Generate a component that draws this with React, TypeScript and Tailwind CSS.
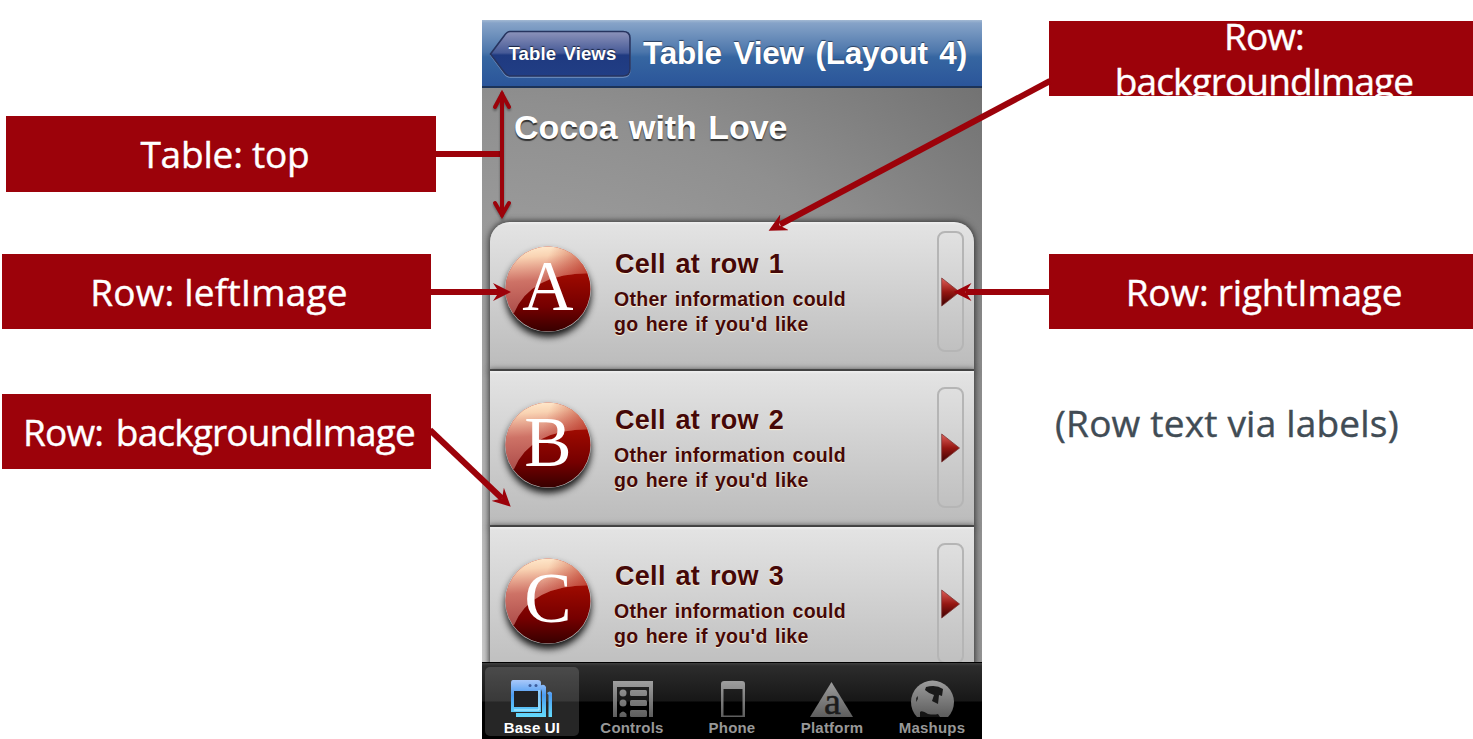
import React from "react";

const CALLOUT =
  "flex shrink-0 items-center justify-center bg-[#9c020a] text-center font-['Open_Sans',sans-serif] text-[37px] leading-[45px] text-white [-webkit-text-stroke:0.4px_white]";

function Callout({ className, children }: { className: string; children: React.ReactNode }) {
  return <div className={`${CALLOUT} ${className}`}>{children}</div>;
}

function NavBar() {
  return (
    <header className="flex h-[68px] shrink-0 items-start border-b-2 border-[#1c3358] bg-[linear-gradient(180deg,#a3b9d3_0px,#86a3c8_3px,#4c76ab_32px,#3666a1_37px,#2b559a_66px)]">
      <div className="relative ml-[7px] mt-[10px] flex h-[48px] w-[143px] items-center">
        <svg className="absolute inset-0" width="143" height="48" viewBox="0 0 143 48">
          <defs>
            <linearGradient id="back" x1="0" y1="0" x2="0" y2="1">
              <stop offset="0" stopColor="#8d93ba" />
              <stop offset=".48" stopColor="#465a97" />
              <stop offset=".53" stopColor="#1f3a80" />
              <stop offset="1" stopColor="#213e85" />
            </linearGradient>
          </defs>
          <path d="M21 2.5H134Q141 2.5 141 9V40Q141 47 134 47H21Q18 47 15 43L2 25.5L15 7Q18 2.5 21 2.5Z" fill="none" stroke="#7896c4" strokeWidth="1.5" />
          <path d="M21 1.5H134Q141 1.5 141 8V39Q141 46 134 46H21Q18 46 15 42L1.500 24L15 6Q18 1.500 21 1.500Z" fill="url(#back)" stroke="#27345f" strokeWidth="1.600" />
        </svg>
        <span className="relative ml-[19.5px] whitespace-nowrap text-[18.5px] font-bold leading-[24px] tracking-[0.15px] text-white [text-shadow:0_-1px_1px_#17233f] [word-spacing:2px]">
          Table Views
        </span>
      </div>
      <h1 className="ml-[11px] mt-[15px] whitespace-nowrap text-[31.5px] font-bold leading-[36px] tracking-[-0.2px] text-white [text-shadow:0_-1px_1px_#2b405f] [word-spacing:3px]">
        Table View (Layout 4)
      </h1>
    </header>
  );
}

function Disc({ letter }: { letter: string }) {
  return (
    <div className="relative mb-[37px] ml-[15px] flex h-[86px] w-[86px] shrink-0 justify-center rounded-full shadow-[0_5px_7px_#151515]">
      <svg className="absolute inset-0" width="86" height="86" viewBox="0 0 86 86">
        <defs>
          <linearGradient id="ball" x1="0" y1="0" x2="0" y2="1">
            <stop offset="0" stopColor="#c21a08" />
            <stop offset=".4" stopColor="#960800" />
            <stop offset=".7" stopColor="#760000" />
            <stop offset="1" stopColor="#360000" />
          </linearGradient>
          <linearGradient id="shine" x1=".4" y1="0" x2=".5" y2="1">
            <stop offset="0" stopColor="#ffe9cc" />
            <stop offset=".15" stopColor="#fbd9b8" stopOpacity=".97" />
            <stop offset=".5" stopColor="#e6a092" stopOpacity=".7" />
            <stop offset="1" stopColor="#dc8a85" stopOpacity=".55" />
          </linearGradient>
          <linearGradient id="tint" x1="0" y1="0" x2="1" y2=".3">
            <stop offset=".5" stopColor="#b01808" stopOpacity="0" />
            <stop offset="1" stopColor="#b01808" stopOpacity=".6" />
          </linearGradient>
          <clipPath id="round">
            <circle cx="43" cy="43" r="42.500" />
          </clipPath>
        </defs>
        <g clipPath="url(#round)">
          <rect width="86" height="86" fill="url(#ball)" />
          <path d="M0 0H86V27Q26 27 9 67L0 67Z" fill="url(#shine)" />
          <path d="M0 0H86V27Q26 27 9 67L0 67Z" fill="url(#tint)" />
        </g>
      </svg>
      <span className="relative font-['Liberation_Serif',serif] text-[71px] leading-[80px] text-white">
        {letter}
      </span>
    </div>
  );
}

function Row({ n, letter, className }: { n: number; letter: string; className: string }) {
  return (
    <div className={`mx-[8px] flex shrink-0 items-end border-b-2 border-[#555] bg-[linear-gradient(180deg,#f0f0f0_0px,#e3e3e3_3px,#bbb_100%)] shadow-[0_0_6px_1px_#333] ${className}`}>
      <Disc letter={letter} />
      <div className="mb-[32px] ml-[23px] grow text-[#450807] [text-shadow:0_1px_1px_#fff3d8]">
        <div className="mb-[2px] ml-[1px] whitespace-nowrap text-[27px] font-bold leading-[36px] tracking-[0.3px] [word-spacing:2px]">Cell at row {n}</div>
        <div className="mt-[5px] whitespace-nowrap text-[19.5px] font-bold leading-[25px] tracking-[0.3px] [word-spacing:1.5px]">
          Other information could
          <br />
          go here if you'd like
        </div>
      </div>
      <div className="mb-[17px] mr-[10.5px] flex h-[121px] w-[27px] shrink-0 items-center rounded-[8px] border-2 border-[#b5b5b5]">
        <svg width="20" height="30" viewBox="0 0 20 30" className="ml-[2px] shrink-0">
          <defs>
            <linearGradient id="tri" x1="0" y1="0" x2="0" y2="1">
              <stop offset="0" stopColor="#e0605a" />
              <stop offset=".5" stopColor="#951712" />
              <stop offset="1" stopColor="#3d0000" />
            </linearGradient>
          </defs>
          <path d="M.7 1L18.5 15L.7 29Z" fill="url(#tri)" stroke="#7d3a38" strokeWidth=".8" />
        </svg>
      </div>
    </div>
  );
}

function IconDefs() {
  return (
    <defs>
      <linearGradient id="blue" x1="0" y1="0" x2="0" y2="38" gradientUnits="userSpaceOnUse">
        <stop offset="0" stopColor="#a9c8fa" />
        <stop offset=".4" stopColor="#4c9cf2" />
        <stop offset="1" stopColor="#65defc" />
      </linearGradient>
      <linearGradient id="grey" x1="0" y1="0" x2="0" y2="38" gradientUnits="userSpaceOnUse">
        <stop offset="0" stopColor="#a0a0a0" />
        <stop offset="1" stopColor="#5c5c5c" />
      </linearGradient>
    </defs>
  );
}

const icons: Record<string, React.ReactNode> = {
  "Base UI": (
    <>
      <path d="M37 13Q40 10 42 13V37H38.500V15Z" fill="url(#blue)" />
      <path d="M30 6Q34 3 36 7V37H6V33H32V12Z" fill="url(#blue)" />
      <path fillRule="evenodd" d="M3 0H28Q31 0 31 3V32H1V3Q1 0 3 0ZM4 11V27H28V11Z" fill="url(#blue)" />
      <path d="M4 11H28V27H4Z" fill="#202124" />
      <path d="M29 10V30H4" fill="none" stroke="#bff3ff" strokeWidth="1" />
      <circle cx="20" cy="5.500" r="1.500" fill="#3d5d9d" />
      <circle cx="26" cy="5.500" r="1.500" fill="#3d5d9d" />
    </>
  ),
  Controls: (
    <g transform="translate(2 0)">
      <path d="M1 1H41V37H37V7H5V37H1Z" fill="url(#grey)" />
      <g fill="url(#grey)">
        <circle cx="11" cy="13" r="3.500" />
        <circle cx="11" cy="23" r="3.500" />
        <path d="M7.500 37V34Q11 29 14.500 34V37Z" />
        <rect x="18" y="10" width="17" height="6" rx="1.500" />
        <rect x="18" y="20" width="17" height="6" rx="1.500" />
        <rect x="18" y="30" width="17" height="7" rx="1.500" />
      </g>
    </g>
  ),
  Phone: (
    <g transform="translate(2 0)">
      <path fillRule="evenodd" d="M12 1H30Q33 1 33 4V37H9V4Q9 1 12 1ZM11.500 9V35.500H30.500V9Z" fill="url(#grey)" />
    </g>
  ),
  Platform: (
    <g transform="translate(.5 0)">
      <path d="M21 2L42.500 37H-.5Z" fill="url(#grey)" />
      <text x="22" y="34" textAnchor="middle" fontFamily="Liberation Serif, serif" fontSize="38" fill="#1c1c1c" stroke="#1c1c1c" strokeWidth=".5">
        a
      </text>
    </g>
  ),
  Mashups: (
    <g transform="translate(1 -1)">
      <path d="M6 38A21.500 21.500 0 1 1 37 38Z" fill="url(#grey)" />
      <path d="M15 8Q25 5 32 10L31 17L28 16L27 25L21 22L23 16Q17 14 14 11Z" fill="#1a1a1a" />
      <path d="M9 33Q11 31 17 35Q23 36 27 35L29 38H9Z" fill="#141414" />
      <path d="M5 19L7 17L7 20L5 23Z" fill="#303030" />
    </g>
  ),
};

function TabBar() {
  return (
    <nav className="flex h-[77px] shrink-0 border-t border-black bg-[linear-gradient(180deg,#404040_0px,#2c2c2c_3px,#171717_38px,#000_39px)]">
      {Object.keys(icons).map((name, i) => (
        <div key={name} className="flex w-[100px] justify-center">
          <div className={`mt-[4px] flex h-[69px] w-[94px] flex-col items-center rounded-[5px] ${i === 0 ? "bg-white/15" : ""}`}>
            <svg width="44" height="38" viewBox="0 0 44 38" className="mt-[13px] shrink-0 overflow-visible">
              <IconDefs />
              {icons[name]}
            </svg>
            <span className={`mt-[1px] whitespace-nowrap text-[15px] font-bold leading-[18px] tracking-[0.2px] ${i === 0 ? "text-white" : "text-[#989898]"}`}>
              {name}
            </span>
          </div>
        </div>
      ))}
    </nav>
  );
}

function Arrows() {
  return (
    <svg className="pointer-events-none absolute inset-0" width="1473" height="739" viewBox="0 0 1473 739">
      <defs>
        <marker id="head" markerUnits="userSpaceOnUse" markerWidth="18" markerHeight="18" refX="17" refY="9" orient="auto">
          <path d="M0 0L18 9L0 18L6 9Z" fill="#9c020a" />
        </marker>
      </defs>
      <g stroke="#9c020a" fill="none" strokeWidth="6">
        <path d="M436 154H502" />
        <path d="M431 292H500" />
        <path d="M1049 292H966" />
        <path d="M1050 81L780 224.500" />
        <path d="M430 430L502 498.500" />
      </g>
      <g stroke="none" fill="none">
        <path d="M431 292H510" markerEnd="url(#head)" />
        <path d="M1049 292H954.500" markerEnd="url(#head)" />
        <path d="M1050 81L769.500 230.300" markerEnd="url(#head)" />
        <path d="M430 430L510 506" markerEnd="url(#head)" />
      </g>
      <g stroke="#9c020a" fill="none" strokeWidth="4" strokeLinecap="round" className="drop-shadow-[0_2px_1px_rgba(0,0,0,0.35)]">
        <path d="M502 94V215" />
        <path d="M495 107L502 94L509 107M495 203L502 215L509 203" />
      </g>
    </svg>
  );
}

export default function App() {
  return (
    <main className="relative flex h-[739px] w-[1473px] overflow-hidden bg-white font-['Liberation_Sans',Arial,sans-serif]">
      <section className="flex w-[482px] shrink-0 flex-col pl-[2px]">
        <Callout className="ml-[4px] mt-[116px] h-[76px] w-[430px] pb-[2px] pl-[8px] tracking-[-0.2px]">Table: top</Callout>
        <Callout className="mt-[62px] h-[75px] w-[429px] pl-[5px] tracking-[0.2px]">Row: leftImage</Callout>
        <Callout className="mt-[65px] h-[75px] w-[429px] pl-[5px] tracking-[-0.85px] [word-spacing:4px]">Row: backgroundImage</Callout>
      </section>

      <section className="mt-[20px] flex h-[719px] w-[500px] shrink-0 flex-col overflow-hidden">
        <NavBar />
        <div className="flex h-[574px] shrink-0 flex-col overflow-hidden bg-[radial-gradient(circle_at_0%_100%,#cccccc_0px,#a2a2a2_340px,#8f8f8f_560px,#6d6d6d_800px)]">
          <h2 className="ml-[32px] mt-[19px] h-[115px] shrink-0 whitespace-nowrap text-[34px] font-bold leading-[40px] tracking-[-0.05px] text-white [text-shadow:0_2px_1px_#333] [word-spacing:2px]">
            Cocoa with Love
          </h2>
          <Row n={1} letter="A" className="h-[149px] rounded-t-[20px]" />
          <Row n={2} letter="B" className="h-[156px]" />
          <Row n={3} letter="C" className="h-[156px]" />
        </div>
        <TabBar />
      </section>

      <section className="flex w-[491px] shrink-0 flex-col pl-[67px]">
        <Callout className="mt-[21px] h-[75px] w-[430px] overflow-hidden pb-[2px] tracking-[-0.9px]">
          Row:
          <br />
          backgroundImage
        </Callout>
        <Callout className="mt-[158px] h-[75px] w-[430px] tracking-[-0.2px]">Row: rightImage</Callout>
        <p className="ml-[6px] mt-[71px] whitespace-nowrap font-['Open_Sans',sans-serif] text-[37px] leading-[45px] tracking-[0.2px] text-[#414c55] [-webkit-text-stroke:0.4px_#414c55]">
          (Row text via labels)
        </p>
      </section>
      <Arrows />
    </main>
  );
}
